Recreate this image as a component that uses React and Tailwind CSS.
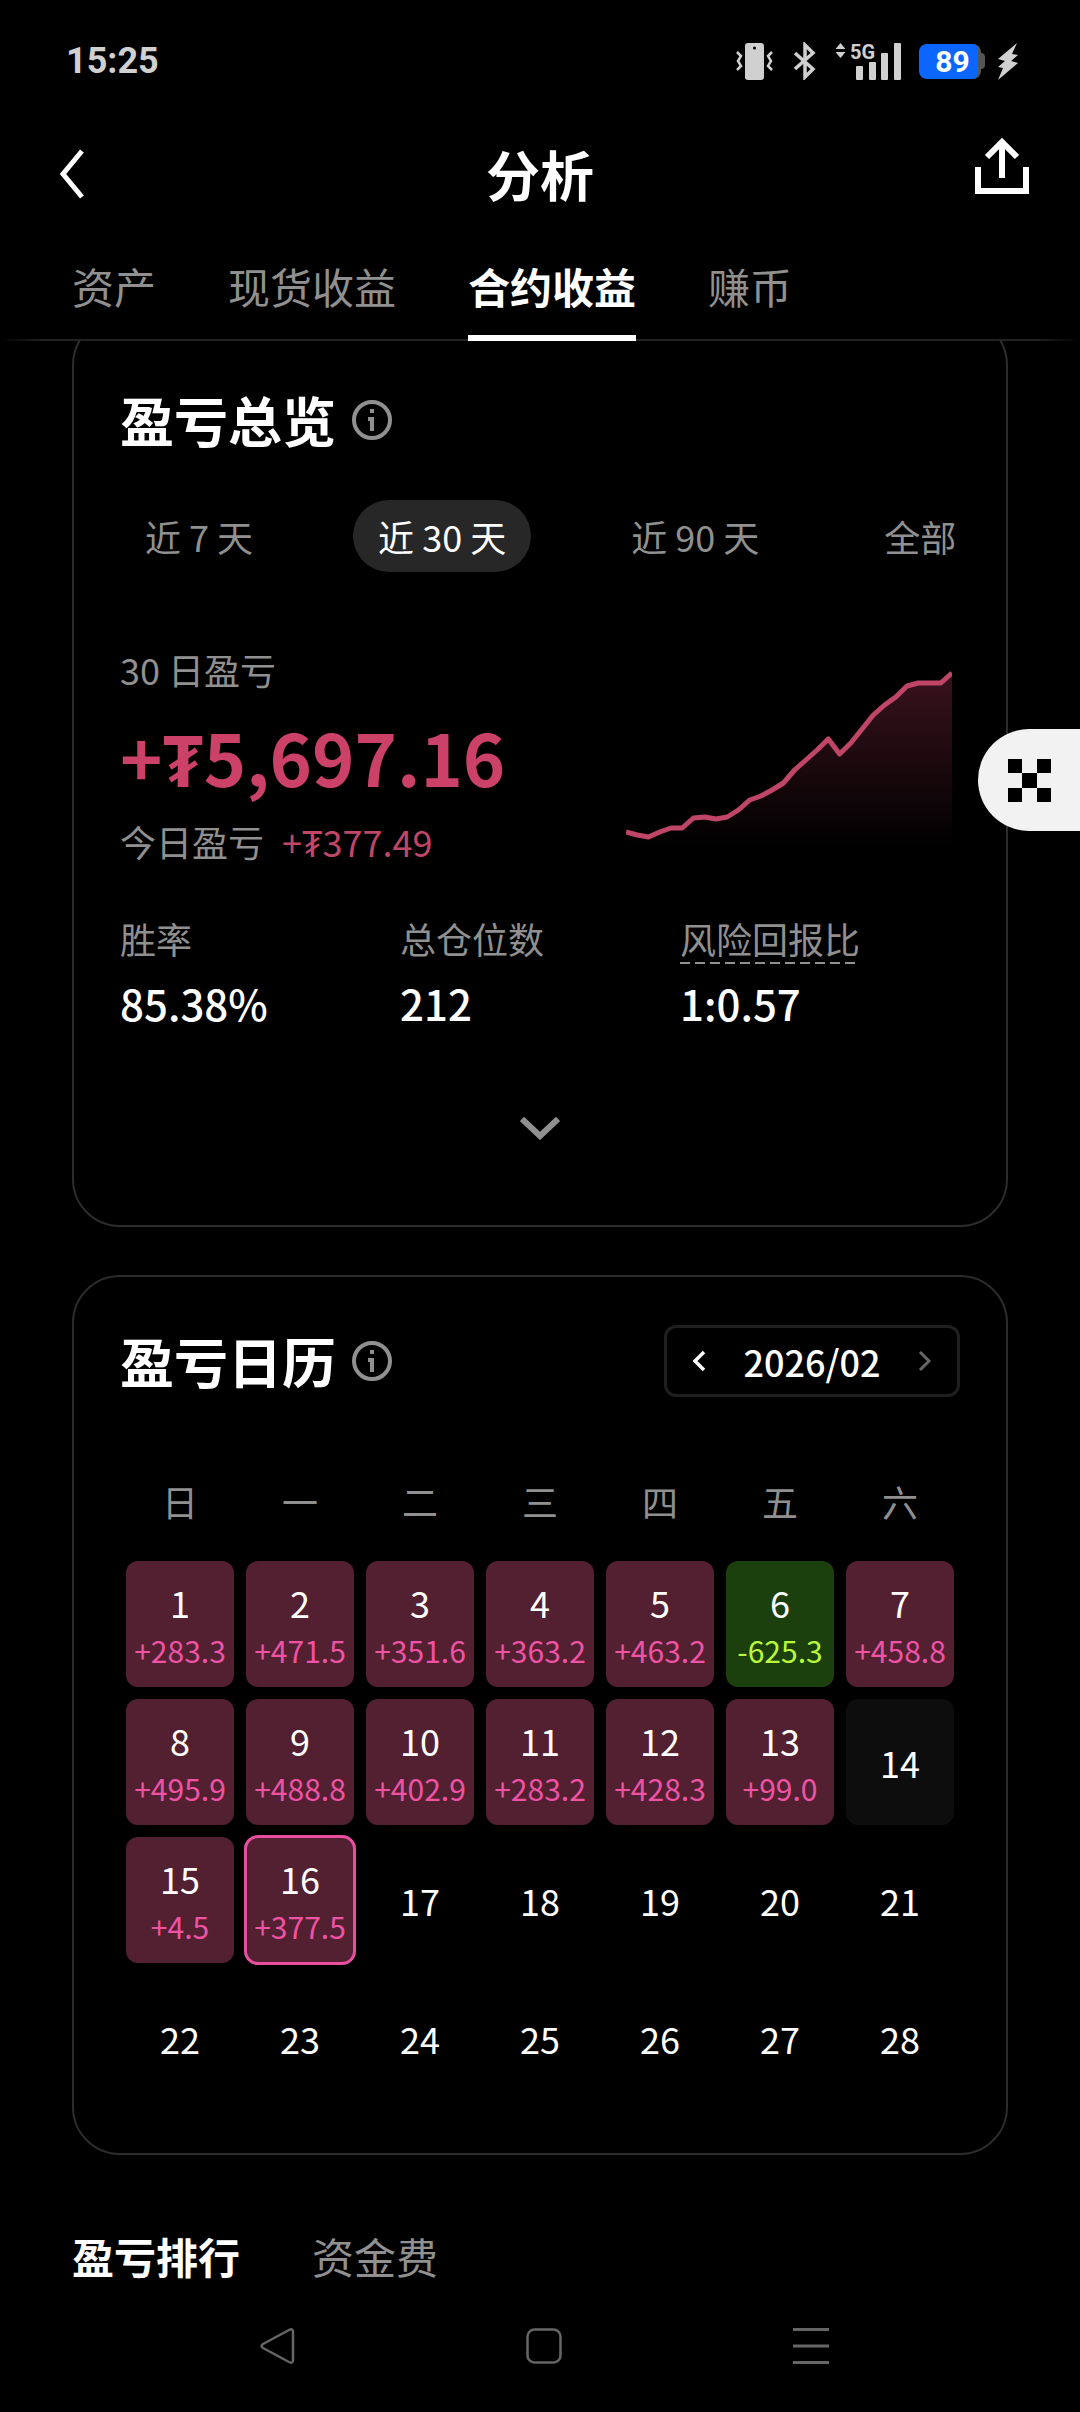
import { useState } from 'react'

const tabs = ['资产', '现货收益', '合约收益', '赚币']
const ranges = ['近 7 天', '近 30 天', '近 90 天', '全部']
const weekdays = ['日', '一', '二', '三', '四', '五', '六']

const today = 16
const pnl = {
  1: '+283.3', 2: '+471.5', 3: '+351.6', 4: '+363.2', 5: '+463.2', 6: '-625.3', 7: '+458.8',
  8: '+495.9', 9: '+488.8', 10: '+402.9', 11: '+283.2', 12: '+428.3', 13: '+99.0', 14: '',
  15: '+4.5', 16: '+377.5',
}
const weeks = [0, 1, 2, 3].map((w) => weekdays.map((_, d) => w * 7 + d + 1))

// y of the cumulative curve, one point per day
const curve = [
  169, 172, 174, 169, 165, 165, 155, 154, 156, 154, 147, 137, 133, 127, 120,
  107, 97, 87, 76, 91, 80, 66, 52, 42, 34, 23, 20, 20, 20, 10,
]

function InfoButton({ label }) {
  return (
    <button type="button" aria-label={label}>
      <svg className="w-10 h-10" viewBox="0 0 40 40" fill="none" stroke="#909090">
        <circle cx="20" cy="20" r="18" strokeWidth="4" />
        <path d="M20 9v4" strokeWidth="4" />
        <path d="M16 19h4v12" strokeWidth="4" />
      </svg>
    </button>
  )
}

function StatusBar() {
  return (
    <div className="h-[108px] pt-[14px] pl-[66px] pr-[62px] flex items-center justify-between text-[#d0d0d0]">
      <span className="text-[36px] leading-[48px] font-bold font-['Roboto',sans-serif]">15:25</span>
      <div className="flex items-center">
        <svg className="w-[37px] h-[38px] mr-[21px]" viewBox="0 0 37 38" fill="none" stroke="currentColor" strokeWidth="2.5">
          <rect x="9" y="1" width="19" height="37" rx="3" fill="currentColor" stroke="none" />
          <circle cx="18.500" cy="6" r="1.500" fill="#000" stroke="none" />
          <path d="M1 10l4 4-3 5 3 5-4 4M36 10l-4 4 3 5-3 5 4 4" />
        </svg>
        <svg className="w-[22px] h-[38px] mr-[19px]" viewBox="0 0 22 38" fill="none" stroke="currentColor" strokeWidth="3.5">
          <path d="M1 11l18 16-8 8V3l8 8L1 27" />
        </svg>
        <svg className="w-[68px] h-[58px] mr-[16px]" viewBox="0 -10 68 58" fill="currentColor">
          <path d="M5.500 1l5 6h-10zM5.500 16l5-6h-10z" />
          <text x="15" y="17" fontSize="20" fontWeight="700" fontFamily="Roboto">5G</text>
          <rect x="21" y="24" width="7" height="14" rx="1" />
          <rect x="34" y="20" width="7" height="18" rx="1" />
          <rect x="46" y="11" width="7" height="27" rx="1" />
          <rect x="59" y="1" width="7" height="37" rx="1" />
        </svg>
        <div className="flex items-center">
          <span className="w-[62px] h-[35px] rounded-lg bg-[#0a66ff] pl-[8px] border-r-3 border-[#555] text-white text-[30px] leading-[36px] font-bold text-center font-['Roboto',sans-serif]">89</span>
          <span className="w-1 h-[16px] rounded-r bg-[#555]" />
        </div>
        <svg className="w-[21px] h-[38px] ml-[12px]" viewBox="0 0 21 38" fill="currentColor">
          <path d="M20 1L1 17l7 2-7 6 5 1-5 12 20-17-7-2 7-6-6-1z" />
        </svg>
      </div>
    </div>
  )
}

function PnlChart() {
  const step = 326 / (curve.length - 1)
  const line = curve.map((y, i) => `${(i * step).toFixed(1)},${y}`).join(' ')
  return (
    <svg className="w-[326px] h-[184px] mr-[8px] shrink-0" viewBox="0 0 326 184" fill="none">
      <defs>
        <linearGradient id="pnl-fill" x1="0" y1="0" x2="0" y2="1">
          <stop offset="0" stopColor="#cc4167" stopOpacity="0.28" />
          <stop offset="1" stopColor="#cc4167" stopOpacity="0" />
        </linearGradient>
      </defs>
      <polygon points={`0,184 ${line} 326,184`} fill="url(#pnl-fill)" />
      <polyline points={line} stroke="#c04668" strokeWidth="5" strokeLinejoin="round" />
    </svg>
  )
}

function Overview() {
  const [range, setRange] = useState('近 30 天')

  return (
    <section className="-mt-6 mx-[72px] px-[46px] pt-[65px] pb-[73px] border-2 border-[#2c2c2c] rounded-[48px]">
      <div className="flex items-center gap-[16px]">
        <h2 className="text-[54px] leading-[72px] font-bold">盈亏总览</h2>
        <InfoButton label="盈亏总览说明" />
      </div>

      <div className="mt-[44px] flex gap-[75px]">
        {ranges.map((r) => (
          <button
            key={r}
            type="button"
            onClick={() => setRange(r)}
            className={`h-[72px] px-[25px] rounded-full whitespace-nowrap text-[36px] leading-[48px] ${r === range ? 'bg-[#272727] text-white' : 'text-[#909090]'}`}
          >
            {r}
          </button>
        ))}
      </div>

      <div className="mt-[73px] flex items-center justify-between">
        <div>
          <p className="text-[36px] leading-[48px] text-[#909090]">30 日盈亏</p>
          <p className="mt-[18px] text-[72px] leading-[90px] font-bold text-[#cc4167]">+₮5,697.16</p>
          <p className="mt-[16px] flex gap-[18px] text-[36px] leading-[48px] text-[#909090]">
            今日盈亏 <span className="text-[#c04668]">+₮377.49</span>
          </p>
        </div>
        <PnlChart />
      </div>

      <dl className="mt-[49px] grid grid-cols-3">
        <div>
          <dt className="pb-[2px] text-[36px] leading-[48px] text-[#909090]">胜率</dt>
          <dd className="mt-[9px] text-[42px] leading-[60px] font-medium">85.38%</dd>
        </div>
        <div>
          <dt className="pb-[2px] text-[36px] leading-[48px] text-[#909090]">总仓位数</dt>
          <dd className="mt-[9px] text-[42px] leading-[60px] font-medium">212</dd>
        </div>
        <div>
          <dt className="w-fit pb-[2px] text-[36px] leading-[48px] text-[#909090] bg-[repeating-linear-gradient(90deg,#909090_0_10px,transparent_10px_15px)] bg-[length:100%_2px] bg-bottom bg-no-repeat">风险回报比</dt>
          <dd className="mt-[9px] text-[42px] leading-[60px] font-medium">1:0.57</dd>
        </div>
      </dl>

      <button type="button" aria-label="展开" className="mt-[71px] mx-auto h-12 flex items-center">
        <svg className="w-10 h-6" viewBox="0 0 40 24" fill="none" stroke="#909090" strokeWidth="6">
          <path d="M2 3l18 17L38 3" />
        </svg>
      </button>
    </section>
  )
}

function Day({ day }) {
  const value = pnl[day]
  let bg = ''
  if (value === '') bg = 'bg-[#0d0d0d]'
  else if (value) bg = value[0] === '-' ? 'bg-[#1b400e]' : 'bg-[#532031]'

  return (
    <button
      type="button"
      className={`w-full h-[126px] rounded-xl flex flex-col items-center justify-center ${bg} ${day === today ? 'outline-3 outline-[#e84fa0] -outline-offset-1' : ''}`}
    >
      <span className="text-[36px] leading-[52px]">{day}</span>
      {value && (
        <span className={`text-[30px] leading-[44px] ${value[0] === '-' ? 'text-[#b9f83c]' : 'text-[#f052a4]'}`}>{value}</span>
      )}
    </button>
  )
}

function Calendar() {
  return (
    <section className="mt-12 mx-[72px] px-[46px] pt-12 pb-[46px] border-2 border-[#2c2c2c] rounded-[48px]">
      <div className="flex items-center justify-between">
        <div className="flex items-center gap-[16px]">
          <h2 className="text-[54px] leading-[72px] font-bold">盈亏日历</h2>
          <InfoButton label="盈亏日历说明" />
        </div>
        <div className="w-[296px] h-[72px] px-[24px] flex items-center justify-between border-3 border-[#1f1f1f] rounded-xl">
          <button type="button" aria-label="上个月">
            <svg className="w-[18px] h-6" viewBox="0 0 18 24" fill="none" stroke="#fff" strokeWidth="3.5">
              <path d="M13 3L4 12l9 9" />
            </svg>
          </button>
          <span className="text-[36px] leading-[48px] font-medium">2026/02</span>
          <button type="button" aria-label="下个月">
            <svg className="w-[18px] h-6" viewBox="0 0 18 24" fill="none" stroke="#666" strokeWidth="3">
              <path d="M5 3l9 9-9 9" />
            </svg>
          </button>
        </div>
      </div>

      <table className="mt-[80px] w-full table-fixed border-separate border-spacing-0">
        <thead>
          <tr>
            {weekdays.map((d) => (
              <th key={d} className="p-0 pb-[30px] text-[36px] leading-[48px] font-normal text-[#909090]">{d}</th>
            ))}
          </tr>
        </thead>
        <tbody>
          {weeks.map((week) => (
            <tr key={week[0]}>
              {week.map((day) => (
                <td key={day} className="p-[6px]">
                  <Day day={day} />
                </td>
              ))}
            </tr>
          ))}
        </tbody>
      </table>
    </section>
  )
}

export default function App() {
  const [tab, setTab] = useState('合约收益')
  const [list, setList] = useState('盈亏排行')

  return (
    <div lang="zh-CN" className="min-h-screen overflow-hidden bg-black text-white font-['Noto_Sans_CJK_SC','Noto_Sans',sans-serif]">
      <StatusBar />

      <header className="h-[132px] px-[51px] grid grid-cols-[54px_1fr_54px] items-center">
        <button type="button" aria-label="返回">
          <svg className="w-[36px] h-[54px]" viewBox="0 0 36 54" fill="none" stroke="currentColor" strokeWidth="5">
            <path d="M31 4L12 27l19 23" />
          </svg>
        </button>
        <h1 className="text-center text-[54px] leading-[72px] font-bold">分析</h1>
        <button type="button" aria-label="分享" className="pb-4">
          <svg className="w-[54px] h-[58px]" viewBox="0 0 54 58" fill="none" stroke="currentColor" strokeWidth="6">
            <path d="M3 30v24h48V30M27 41V6" />
            <path d="M12 20L27 5l15 15" />
          </svg>
        </button>
      </header>

      <nav className="pl-[72px] h-[101px] flex items-end gap-[72px] bg-[linear-gradient(90deg,transparent,#222_4%,#222_96%,transparent)] bg-[length:100%_2px] bg-bottom bg-no-repeat">
        {tabs.map((t) => (
          <button
            key={t}
            type="button"
            onClick={() => setTab(t)}
            className={`pb-[19px] text-[42px] leading-[60px] border-b-6 ${t === tab ? 'font-bold border-white' : 'text-[#909090] border-transparent'}`}
          >
            {t}
          </button>
        ))}
      </nav>

      <main className="overflow-hidden">
        <Overview />
        <Calendar />
        <div className="mt-[71px] px-[72px] flex gap-[72px] text-[42px] leading-[60px]">
          {['盈亏排行', '资金费'].map((l) => (
            <button
              key={l}
              type="button"
              onClick={() => setList(l)}
              className={l === list ? 'font-bold' : 'text-[#909090]'}
            >
              {l}
            </button>
          ))}
        </div>
      </main>

      <nav className="pt-[42px] pb-12 pl-[8px] flex justify-center gap-[231px] text-[#666]">
        <button type="button" aria-label="系统返回">
          <svg className="w-9 h-9" viewBox="0 0 36 36" fill="none" stroke="currentColor" strokeWidth="2.5" strokeLinejoin="round">
            <path d="M34 4v28q0 4-4 2L4 20q-3-2 0-4L30 2q4-2 4 2z" />
          </svg>
        </button>
        <button type="button" aria-label="主屏幕">
          <svg className="w-9 h-9" viewBox="0 0 36 36" fill="none" stroke="currentColor" strokeWidth="2.5">
            <rect x="1.500" y="1.500" width="33" height="33" rx="7" />
          </svg>
        </button>
        <button type="button" aria-label="多任务">
          <svg className="w-9 h-9" viewBox="0 0 36 36" fill="none" stroke="currentColor" strokeWidth="3">
            <path d="M0 1.500h36M0 18h36M0 34.500h36" />
          </svg>
        </button>
      </nav>

      <button type="button" aria-label="悬浮入口" className="absolute right-0 top-[729px] w-[102px] h-[102px] pl-[30px] rounded-l-full bg-[#f2f2f2]">
        <svg className="w-[43px] h-[43px]" viewBox="0 0 3 3" fill="#000" shapeRendering="crispEdges">
          <path d="M0 0h1v1h-1zM2 0h1v1h-1zM1 1h1v1h-1zM0 2h1v1h-1zM2 2h1v1h-1z" />
        </svg>
      </button>
    </div>
  )
}
